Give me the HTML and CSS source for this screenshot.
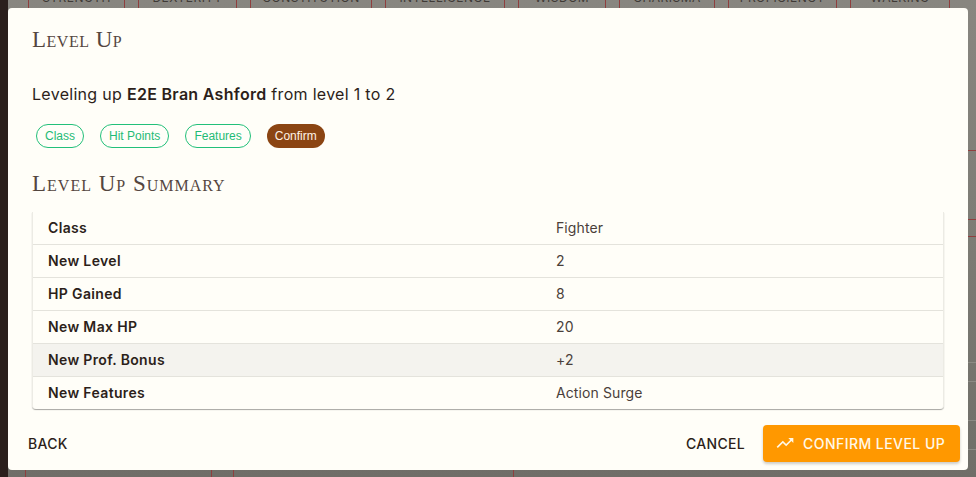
FILE: index.html
```html
<!DOCTYPE html>
<html lang="en">
<head>
    <meta charset="UTF-8">
    <meta name="viewport" content="width=device-width, initial-scale=1.0">
    <title>Level Up</title>
    <link rel="stylesheet" href="styles.css">
</head>
<body>
    <!-- Character sheet behind the dialog -->
    <div class="app">
        <div class="rail"></div>
        <div class="sheet">
            <div class="stats">
                <div class="stat stat-str">STRENGTH</div>
                <div class="stat stat-dex">DEXTERITY</div>
                <div class="stat stat-con">CONSTITUTION</div>
                <div class="stat stat-int">INTELLIGENCE</div>
                <div class="stat stat-wis">WISDOM</div>
                <div class="stat stat-cha">CHARISMA</div>
                <div class="stat stat-pro">PROFICIENCY</div>
                <div class="stat stat-wlk">WALKING</div>
            </div>
            <div class="sheet-rule rule-a"></div>
            <div class="sheet-rule rule-b"></div>
            <div class="sheet-rule rule-c"></div>
            <div class="sheet-line line-a"></div>
            <div class="sheet-line line-b"></div>
            <div class="sheet-line line-c"></div>
            <div class="sheet-line line-d"></div>
            <div class="lower">
                <div class="lower-cell cell-wide"></div>
                <div class="lower-cell cell-wider"></div>
            </div>
        </div>
    </div>

    <!-- Level up dialog -->
    <div class="dialog">
        <h2 class="dialog-title">Level Up</h2>
        <div class="dialog-content">
            <p class="intro">Leveling up <strong>E2E Bran Ashford</strong> from level 1 to 2</p>
            <div class="chips">
                <span class="chip">Class</span>
                <span class="chip">Hit Points</span>
                <span class="chip">Features</span>
                <span class="chip chip-active">Confirm</span>
            </div>
            <h3 class="summary-title">Level Up Summary</h3>
            <table class="summary">
                <tr><th>Class</th><td>Fighter</td></tr>
                <tr><th>New Level</th><td>2</td></tr>
                <tr><th>HP Gained</th><td>8</td></tr>
                <tr><th>New Max HP</th><td>20</td></tr>
                <tr class="row-hover"><th>New Prof. Bonus</th><td>+2</td></tr>
                <tr><th>New Features</th><td>Action Surge</td></tr>
            </table>
        </div>
        <div class="dialog-actions">
            <button type="button" class="btn">Back</button>
            <div class="actions-right">
                <button type="button" class="btn">Cancel</button>
                <button type="button" class="btn btn-confirm">
                    <svg class="btn-icon" viewBox="0 0 24 24" aria-hidden="true"><path d="m16 6 2.29 2.29-4.88 4.88-4-4L2 16.59 3.41 18l6-6 4 4 6.3-6.29L22 12V6z"></path></svg>
                    Confirm Level Up
                </button>
            </div>
        </div>
    </div>
</body>
</html>
```

FILE: styles.css
```css
* {
    box-sizing: border-box;
}
html, body {
    height: 100%;
}
body {
    margin: 0;
    overflow: hidden;
    font-family: Inter, "Liberation Sans", sans-serif;
    color: #2c1f1a;
}

/* Page behind the dialog */
.app {
    display: flex;
    height: 477px;
}
.rail {
    width: 8px;
    background: #2a1f1c;
}
.sheet {
    flex: 1;
    display: flex;
    flex-direction: column;
    background: linear-gradient(180deg, #888680 0%, #7d7c75 50%, #6f6e68 100%);
    overflow: hidden;
}
.stats {
    display: flex;
    gap: 13px;
    height: 10px;
    margin: -2px 0 0 20px;
}
.stat {
    height: 10px;
    border-left: 1px solid #8f3f3e;
    border-right: 1px solid #8f3f3e;
    font-size: 12px;
    line-height: 0;
    letter-spacing: 0.5px;
    text-align: center;
    color: #3f3a36;
    overflow: hidden;
}
.stat-str { width: 97px; }
.stat-dex { width: 99px; }
.stat-con { width: 122px; }
.stat-int { width: 120px; }
.stat-wis { width: 88px; }
.stat-cha { width: 96px; }
.stat-pro { width: 109px; }
.stat-wlk { width: 100px; }
.sheet-rule {
    height: 1px;
    background: #8f3f3e;
}
.rule-a { margin-top: 142px; }
.rule-b { margin-top: 68px; }
.rule-c { margin-top: 16px; }
.sheet-line {
    height: 1px;
    background: #8b8a84;
}
.line-a { margin-top: 125px; }
.line-b { margin-top: 18px; }
.line-c { margin-top: 38px; }
.line-d { margin-top: 28px; }
.lower {
    display: flex;
    gap: 21px;
    margin-top: 19px;
    margin-left: 17px;
}
.lower-cell {
    height: 8px;
    border-left: 1px solid #8f3f3e;
    border-right: 1px solid #8f3f3e;
}
.cell-wide { width: 187px; }
.cell-wider { width: 281px; }

/* Dialog */
.dialog {
    position: fixed;
    left: 8px;
    top: 8px;
    width: 960px;
    height: 462px;
    display: flex;
    flex-direction: column;
    background: #fffef8;
    border-radius: 4px;
}
.dialog-title {
    margin: 0;
    padding: 16px 24px 0;
    height: 56px;
    font-family: "Liberation Serif", serif;
    font-variant: small-caps;
    font-size: 23px;
    font-weight: 400;
    line-height: 31px;
    letter-spacing: 0.5px;
    color: #54463f;
}
.dialog-content {
    flex: 1;
    padding: 0 24px;
}
.intro {
    margin: 20px 0 0;
    font-size: 16px;
    line-height: 20px;
    letter-spacing: 0.3px;
}
.intro strong {
    font-weight: 600;
}
.chips {
    display: flex;
    gap: 16px;
    margin: 20px 0 0 4px;
}
.chip {
    height: 24px;
    padding: 0 8px;
    border: 1px solid #22c07a;
    border-radius: 12px;
    font-family: "Liberation Sans", sans-serif;
    font-size: 12px;
    line-height: 22px;
    color: #1fbb76;
}
.chip-active {
    border: none;
    background: #8b4513;
    line-height: 24px;
    color: #fff3e6;
}
.summary-title {
    margin: 20px 0 0;
    font-family: "Liberation Serif", serif;
    font-variant: small-caps;
    font-size: 23px;
    font-weight: 400;
    line-height: 31px;
    letter-spacing: 1px;
    color: #54463f;
}
.summary {
    width: 912px;
    margin-top: 13px;
    border-collapse: separate;
    border-spacing: 0;
    border-left: 1px solid #ecebe4;
    border-right: 1px solid #ecebe4;
    border-radius: 0 0 4px 4px;
    box-shadow: 0 1px 1px rgba(0, 0, 0, 0.35);
    font-size: 14px;
}
.summary th,
.summary td {
    height: 33px;
    padding: 0 16px 2px 15px;
    border-bottom: 1px solid #e4e3dc;
    text-align: left;
}
.summary th {
    width: 508px;
    font-weight: 600;
    letter-spacing: 0.35px;
    color: #2c1f1a;
}
.summary td {
    font-weight: 400;
    letter-spacing: 0.1px;
    color: #4a3f3a;
}
.summary tr:last-child th,
.summary tr:last-child td {
    height: 32px;
    border-bottom: none;
}
.row-hover {
    background: #f4f3ee;
}
.dialog-actions {
    display: flex;
    justify-content: space-between;
    align-items: center;
    padding: 0 8px 8px;
}
.actions-right {
    display: flex;
    align-items: center;
    gap: 6px;
}
.btn {
    height: 37px;
    padding: 0 12px 1px;
    border: none;
    border-radius: 4px;
    background: transparent;
    font-family: Inter, "Liberation Sans", sans-serif;
    font-size: 14px;
    font-weight: 500;
    letter-spacing: 0.3px;
    text-transform: uppercase;
    white-space: nowrap;
    color: #2c1f1a;
    cursor: pointer;
}
.btn-confirm {
    display: flex;
    align-items: center;
    gap: 8px;
    width: 197px;
    background: #ff9800;
    letter-spacing: 0.45px;
    color: #fff8e8;
    box-shadow: 0 2px 3px rgba(0, 0, 0, 0.2);
}
.btn-icon {
    flex-shrink: 0;
    width: 20px;
    height: 20px;
    fill: currentColor;
}
```
